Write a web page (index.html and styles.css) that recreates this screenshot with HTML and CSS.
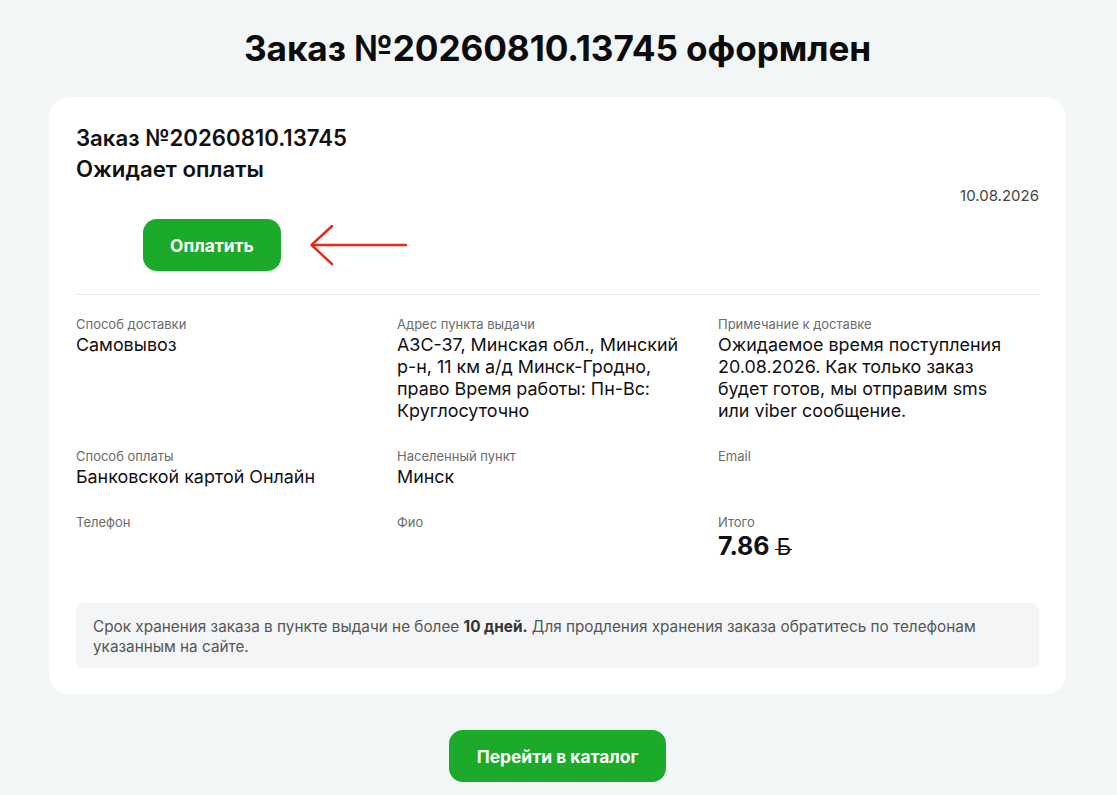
FILE: index.html
```html
<!DOCTYPE html>
<html lang="ru">
<head>
<meta charset="utf-8">
<title>Заказ оформлен</title>
<link rel="stylesheet" href="styles.css">
</head>
<body>
<main class="page">
  <h1 class="page-title">Заказ №20260810.13745 оформлен</h1>
  <section class="card">
    <div class="card-head">
      <div class="order-no">Заказ №20260810.13745</div>
      <div class="order-status">Ожидает оплаты</div>
    </div>
    <div class="order-date">10.08.2026</div>
    <div class="pay-row">
      <button class="btn btn-pay">Оплатить</button>
      <svg class="arrow" width="98" height="44" viewBox="0 0 98 44" aria-hidden="true">
        <path d="M97 22 H2.5 M23 3 L2.5 22 L23 41" fill="none" stroke="#e8291c" stroke-width="2.4" stroke-linecap="round" stroke-linejoin="round"/>
      </svg>
    </div>
    <hr class="divider">
    <div class="info-grid">
      <div class="info">
        <div class="info-label">Способ доставки</div>
        <div class="info-value">Самовывоз</div>
      </div>
      <div class="info">
        <div class="info-label">Адрес пункта выдачи</div>
        <div class="info-value">АЗС-37, Минская обл., Минский р-н, 11 км а/д Минск-Гродно, право Время работы: Пн-Вс: Круглосуточно</div>
      </div>
      <div class="info">
        <div class="info-label">Примечание к доставке</div>
        <div class="info-value">Ожидаемое время поступления 20.08.2026. Как только заказ будет готов, мы отправим sms или viber сообщение.</div>
      </div>
      <div class="info">
        <div class="info-label">Способ оплаты</div>
        <div class="info-value">Банковской картой Онлайн</div>
      </div>
      <div class="info">
        <div class="info-label">Населенный пункт</div>
        <div class="info-value">Минск</div>
      </div>
      <div class="info">
        <div class="info-label">Email</div>
        <div class="info-value info-blank"></div>
      </div>
      <div class="info">
        <div class="info-label">Телефон</div>
        <div class="info-value info-blank"></div>
      </div>
      <div class="info">
        <div class="info-label">Фио</div>
        <div class="info-value info-blank"></div>
      </div>
      <div class="info">
        <div class="info-label">Итого</div>
        <div class="info-total">7.86 <span class="currency">Б</span></div>
      </div>
    </div>
    <div class="notice">Срок хранения заказа в пункте выдачи не более <b>10 дней.</b> Для продления хранения заказа обратитесь по телефонам указанным на сайте.</div>
  </section>
  <div class="footer-actions">
    <button class="btn btn-catalog">Перейти в каталог</button>
  </div>
</main>
</body>
</html>
```

FILE: styles.css
```css
* { box-sizing: border-box; }

html, body {
  margin: 0;
  padding: 0;
  background: #f3f6f7;
  font-family: Inter, "Noto Sans", sans-serif;
  color: #111;
}

.page {
  display: flex;
  flex-direction: column;
  align-items: center;
  padding-top: 28px;
  padding-right: 2px;
}

.page-title {
  margin: 0;
  font-size: 35.2px;
  line-height: 40px;
  font-weight: 700;
  color: #0c0c0c;
  letter-spacing: -0.1px;
}

.card {
  margin-top: 29px;
  width: 1017px;
  background: #fff;
  border-radius: 20px;
  padding: 25px 27px 26px 27px;
}

.order-no,
.order-status {
  font-size: 22.2px;
  line-height: 31px;
  font-weight: 600;
  color: #111;
}

.order-date {
  margin-top: 2px;
  text-align: right;
  font-size: 15px;
  line-height: 20px;
  color: #444;
}

.pay-row {
  margin-top: 13px;
  padding-left: 67px;
  display: flex;
  align-items: center;
  gap: 28px;
}

.btn {
  border: none;
  background: #1caa2a;
  color: #fff;
  font-family: Inter, "Noto Sans", sans-serif;
  font-weight: 700;
  font-size: 17.4px;
  height: 52px;
  border-radius: 14px;
  cursor: pointer;
}

.btn-pay {
  width: 138px;
}

.arrow {
  display: block;
}

.divider {
  margin: 23px 0 0 0;
  border: none;
  border-top: 1px solid #e4e6e8;
  height: 0;
}

.info-grid {
  display: grid;
  grid-template-columns: repeat(3, 1fr);
  row-gap: 26px;
  padding-top: 21px;
}

.info {
  padding-right: 32px;
}

.info-label {
  font-size: 13px;
  line-height: 16px;
  color: #6b6b6b;
}

.info-value {
  margin-top: 2px;
  font-size: 17.9px;
  line-height: 22px;
  color: #111;
}

.info-blank {
  height: 22px;
}

.info-total {
  margin-top: 1px;
  font-size: 25px;
  line-height: 30px;
  font-weight: 700;
  color: #111;
}

.currency {
  position: relative;
  font-weight: 400;
  font-size: 23px;
  margin-left: 1px;
}

.currency::after {
  content: "";
  position: absolute;
  left: -1px;
  right: -1px;
  top: 56%;
  border-top: 1.5px solid #111;
}

.notice {
  margin-top: 41px;
  background: #f3f5f6;
  border-radius: 8px;
  padding: 14px 17px 11px 17px;
  font-size: 15.3px;
  line-height: 20px;
  color: #555;
}

.notice b {
  color: #333;
  font-weight: 700;
}

.footer-actions {
  margin-top: 36px;
  display: flex;
  justify-content: center;
}

.btn-catalog {
  width: 217px;
}
```
